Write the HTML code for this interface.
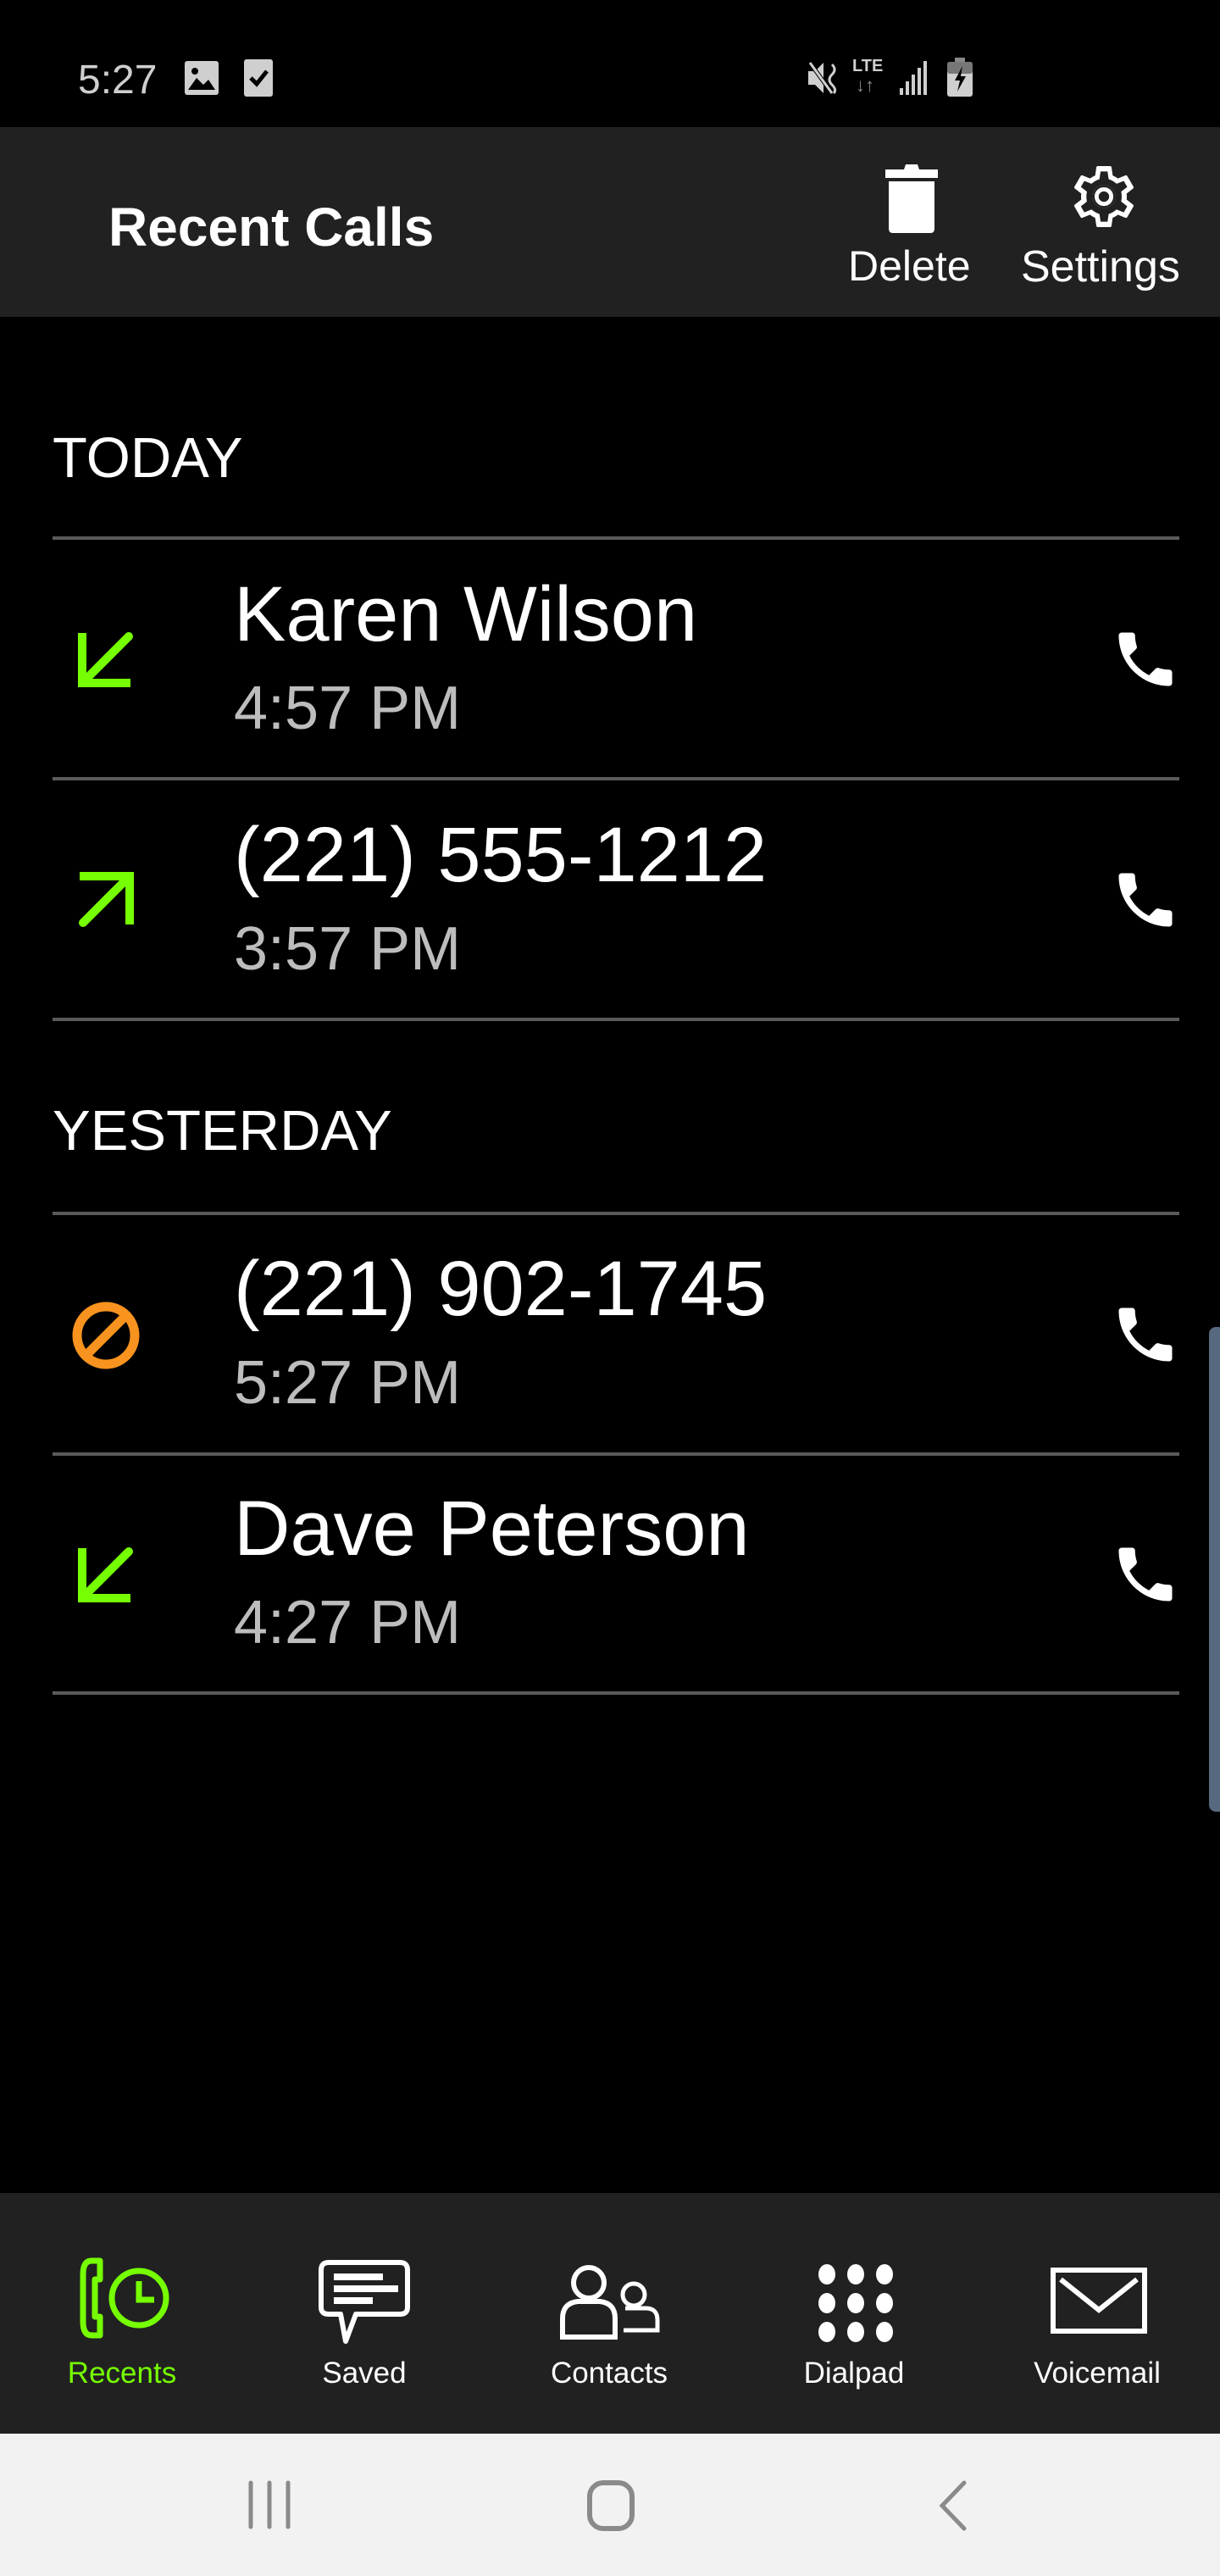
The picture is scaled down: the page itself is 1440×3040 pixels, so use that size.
<!DOCTYPE html>
<html><head><meta charset="utf-8"><style>
html,body{margin:0;padding:0}
body{width:1440px;height:3040px;background:#000;position:relative;overflow:hidden;font-family:"Liberation Sans",Arial,sans-serif;}
.a{position:absolute;line-height:1;white-space:nowrap}
.line{position:absolute;left:62px;width:1330px;height:4px;background:#5a5a5a}
.name{font-size:92px;color:#fff;left:276px}
.time{font-size:72px;color:#bdbdbd;left:276px}
.sec{font-size:67px;color:#fff;left:62px}
.nl{font-size:35px;color:#fff;transform:translateX(-50%)}
svg{position:absolute}
</style></head><body>
<!-- status bar -->
<div class="a" style="left:92px;top:71px;font-size:48px;color:#cfcfcf">5:27</div>
<svg style="left:218px;top:72px" width="40" height="40" viewBox="0 0 40 40"><rect x="0" y="0" width="40" height="40" rx="3" fill="#cfcfcf"/><circle cx="12" cy="12" r="4" fill="#000"/><path d="M4 34 L14 20 L22 28 L28 22 L36 34Z" fill="#000"/></svg>
<svg style="left:288px;top:70px" width="34" height="44" viewBox="0 0 34 44"><rect x="0" y="0" width="34" height="44" rx="3" fill="#cfcfcf"/><path d="M8 22 L15 29 L27 14" stroke="#000" stroke-width="5" fill="none"/></svg>
<svg style="left:952px;top:70px" width="44" height="44" viewBox="0 0 44 44"><path d="M2 14 H10 L20 4 V40 L10 30 H2Z" fill="#cfcfcf"/><path d="M4 4 L30 40" stroke="#000" stroke-width="5"/><path d="M4 4 L30 40" stroke="#cfcfcf" stroke-width="3"/><path d="M30 6 Q36 12 30 18 Q24 24 30 30 Q36 36 32 40" stroke="#cfcfcf" stroke-width="3" fill="none"/></svg>
<div class="a" style="left:1006px;top:68px;font-size:20px;color:#cfcfcf;font-weight:bold">LTE</div>
<div class="a" style="left:1010px;top:90px;font-size:22px;color:#888">↓↑</div>
<svg style="left:1062px;top:72px" width="34" height="40" viewBox="0 0 34 40"><rect x="0" y="32" width="4" height="8" fill="#cfcfcf"/><rect x="7" y="24" width="4" height="16" fill="#cfcfcf"/><rect x="14" y="16" width="4" height="24" fill="#cfcfcf"/><rect x="21" y="8" width="4" height="32" fill="#cfcfcf"/><rect x="28" y="0" width="4" height="40" fill="#cfcfcf"/></svg>
<svg style="left:1118px;top:68px" width="30" height="46" viewBox="0 0 30 46"><rect x="9" y="0" width="12" height="6" fill="#888"/><rect x="0" y="5" width="30" height="41" rx="3" fill="#cfcfcf"/><rect x="0" y="5" width="30" height="14" rx="3" fill="#777"/><path d="M18 10 L9 27 H15 L12 40 L22 22 H16Z" fill="#000"/></svg>
<!-- header -->
<div style="position:absolute;left:0;top:150px;width:1440px;height:224px;background:#212121"></div>
<div class="a" style="left:128px;top:236px;font-size:64px;color:#fff;font-weight:bold">Recent Calls</div>
<svg style="left:1045px;top:194px" width="62" height="82" viewBox="0 0 62 82"><path d="M24 0 H38 L40 6 H62 V16 H0 V6 H22Z" fill="#fff"/><path d="M4 20 H58 V76 Q58 81 53 81 H9 Q4 81 4 76Z" fill="#fff"/></svg>
<div class="a" style="left:1001px;top:289px;font-size:50px;color:#fff">Delete</div>
<svg style="left:1258px;top:187px" width="90" height="90" viewBox="0 0 24 24"><path fill="#fff" d="M19.14 12.94c.04-.3.06-.61.06-.94 0-.32-.02-.64-.07-.94l2.03-1.58a.49.49 0 0 0 .12-.61l-1.920-3.32a.488.488 0 0 0-.59-.22l-2.39.96c-.5-.38-1.03-.7-1.62-.94l-.36-2.54a.484.484 0 0 0-.48-.41h-3.84c-.24 0-.43.17-.47.41l-.36 2.54c-.59.24-1.130.57-1.62.94l-2.39-.96c-.22-.08-.47 0-.59.22L2.74 8.87c-.12.21-.08.47.12.61l2.03 1.58c-.05.3-.09.63-.09.94s.02.64.07.94l-2.03 1.58a.49.49 0 0 0-.12.61l1.92 3.32c.12.22.37.29.59.22l2.39-.96c.5.38 1.03.7 1.62.94l.36 2.54c.05.24.24.41.48.41h3.84c.24 0 .44-.17.47-.41l.36-2.54c.59-.24 1.13-.56 1.62-.94l2.39.96c.22.08.47 0 .59-.22l1.92-3.32c.12-.22.07-.47-.12-.61l-2.01-1.58zM12 15.6c-1.98 0-3.6-1.62-3.6-3.6s1.62-3.6 3.6-3.6 3.6 1.62 3.6 3.6-1.62 3.6-3.6 3.6z"/><path fill="#212121" d="M17.6 12c0-.3-.02-.58-.06-.87l-.1-.7 1.9-1.48-1.1-1.9-2.24.9-.56-.43a5.8 5.8 0 0 0-1.3-.76l-.66-.27-.34-2.39h-2.2l-.34 2.39-.66.27c-.46.19-.9.45-1.3.76l-.56.43-2.24-.9-1.1 1.9 1.9 1.48-.1.7c-.04.3-.06.58-.06.87s.02.57.06.87l.1.7-1.9 1.48 1.1 1.9 2.24-.9.56.43c.4.31.84.57 1.3.76l.66.27.34 2.39h2.2l.34-2.39.66-.27c.46-.19.9-.45 1.3-.76l.56-.43 2.24.9 1.1-1.9-1.9-1.48.1-.7c.04-.3.06-.58.06-.87zM12 15.6c-1.98 0-3.6-1.62-3.6-3.6s1.62-3.6 3.6-3.6 3.6 1.62 3.6 3.6-1.62 3.6-3.6 3.6z"/><circle cx="12" cy="12" r="2.3" fill="none" stroke="#fff" stroke-width="1.3"/></svg>
<div class="a" style="left:1205px;top:289px;font-size:52px;color:#fff">Settings</div>

<!-- list -->
<div class="a sec" style="top:507px">TODAY</div>
<div class="line" style="top:633px"></div>
<div class="a name" style="top:679px">Karen Wilson</div>
<div class="a time" style="top:800px">4:57 PM</div>
<div class="line" style="top:917px"></div>
<div class="a name" style="top:963px">(221) 555-1212</div>
<div class="a time" style="top:1084px">3:57 PM</div>
<div class="line" style="top:1201px"></div>
<div class="a sec" style="top:1301px">YESTERDAY</div>
<div class="line" style="top:1430px"></div>
<div class="a name" style="top:1475px">(221) 902-1745</div>
<div class="a time" style="top:1596px">5:27 PM</div>
<div class="line" style="top:1714px"></div>
<div class="a name" style="top:1758px">Dave Peterson</div>
<div class="a time" style="top:1879px">4:27 PM</div>
<div class="line" style="top:1996px"></div>

<!-- direction icons -->
<svg style="left:92px;top:745px" width="66" height="66" viewBox="0 0 66 66"><path d="M60 6 L8 58" stroke="#76ff03" stroke-width="10" stroke-linecap="round"/><path d="M5 2 V61 H62" stroke="#76ff03" stroke-width="10" fill="none"/></svg>
<svg style="left:92px;top:1029px" width="66" height="66" viewBox="0 0 66 66"><path d="M6 60 L58 8" stroke="#76ff03" stroke-width="10" stroke-linecap="round"/><path d="M2 5 H61 V62" stroke="#76ff03" stroke-width="10" fill="none"/></svg>
<svg style="left:84px;top:1535px" width="82" height="82" viewBox="0 0 82 82"><circle cx="41" cy="41" r="34" stroke="#f7931e" stroke-width="11" fill="none"/><path d="M64 18 L18 64" stroke="#f7931e" stroke-width="11"/></svg>
<svg style="left:92px;top:1825px" width="66" height="66" viewBox="0 0 66 66"><path d="M60 6 L8 58" stroke="#76ff03" stroke-width="10" stroke-linecap="round"/><path d="M5 2 V61 H62" stroke="#76ff03" stroke-width="10" fill="none"/></svg>

<!-- phone icons -->
<svg style="left:1310px;top:736px" width="84" height="84" viewBox="0 0 24 24"><path fill="#fff" d="M6.62 10.79c1.44 2.83 3.76 5.14 6.59 6.59l2.2-2.2c.27-.27.67-.36 1.02-.24 1.12.37 2.33.57 3.57.57.55 0 1 .45 1 1V20c0 .55-.45 1-1 1-9.39 0-17-7.61-17-17 0-.55.45-1 1-1h3.5c.55 0 1 .45 1 1 0 1.250.2 2.45.57 3.57.11.35.03.74-.25 1.02l-2.2 2.2z"/></svg>
<svg style="left:1310px;top:1020px" width="84" height="84" viewBox="0 0 24 24"><path fill="#fff" d="M6.62 10.79c1.44 2.83 3.76 5.14 6.59 6.59l2.2-2.2c.27-.27.67-.36 1.02-.24 1.12.37 2.33.57 3.57.57.55 0 1 .45 1 1V20c0 .55-.45 1-1 1-9.39 0-17-7.61-17-17 0-.55.45-1 1-1h3.5c.55 0 1 .45 1 1 0 1.25.2 2.45.57 3.57.11.35.03.74-.25 1.02l-2.2 2.2z"/></svg>
<svg style="left:1310px;top:1533px" width="84" height="84" viewBox="0 0 24 24"><path fill="#fff" d="M6.62 10.79c1.44 2.83 3.76 5.14 6.59 6.59l2.2-2.2c.27-.27.67-.36 1.02-.24 1.12.37 2.33.57 3.57.57.55 0 1 .45 1 1V20c0 .55-.45 1-1 1-9.39 0-17-7.61-17-17 0-.55.45-1 1-1h3.5c.55 0 1 .45 1 1 0 1.25.2 2.45.57 3.57.11.35.03.74-.25 1.02l-2.2 2.2z"/></svg>
<svg style="left:1310px;top:1816px" width="84" height="84" viewBox="0 0 24 24"><path fill="#fff" d="M6.62 10.79c1.44 2.83 3.76 5.14 6.59 6.59l2.2-2.2c.27-.27.67-.36 1.02-.24 1.12.37 2.33.57 3.57.57.55 0 1 .45 1 1V20c0 .55-.45 1-1 1-9.39 0-17-7.61-17-17 0-.55.45-1 1-1h3.5c.55 0 1 .45 1 1 0 1.25.2 2.45.57 3.57.11.35.03.74-.25 1.02l-2.2 2.2z"/></svg>

<!-- scrollbar -->
<div style="position:absolute;left:1427px;top:1566px;width:20px;height:572px;background:#56697f;border-radius:8px"></div>

<!-- bottom nav -->
<div style="position:absolute;left:0;top:2588px;width:1440px;height:284px;background:#212121"></div>
<svg style="left:90px;top:2664px" width="112" height="96" viewBox="0 0 112 96"><path d="M28 4 H18 Q8 4 8 20 V76 Q8 92 18 92 H28 V70 H22 V26 H28Z" stroke="#76ff03" stroke-width="7" fill="none" stroke-linejoin="round"/><circle cx="74" cy="48" r="32" stroke="#76ff03" stroke-width="7" fill="none"/><path d="M74 28 V50 H92" stroke="#76ff03" stroke-width="7" fill="none"/></svg>
<svg style="left:376px;top:2667px" width="108" height="100" viewBox="0 0 108 100"><path d="M12 3 H96 Q105 3 105 12 V56 Q105 64 96 64 H44 L32 96 L26 64 H12 Q3 64 3 56 V12 Q3 3 12 3Z" stroke="#fff" stroke-width="6" fill="none" stroke-linejoin="round"/><rect x="18" y="16" width="58" height="8" fill="#fff"/><rect x="18" y="30" width="76" height="8" fill="#fff"/><rect x="18" y="44" width="46" height="8" fill="#fff"/></svg>
<svg style="left:660px;top:2670px" width="120" height="92" viewBox="0 0 120 92"><circle cx="35" cy="24" r="18" stroke="#fff" stroke-width="6" fill="none"/><path d="M4 88 V66 Q4 48 22 46 H48 Q66 48 66 66 V88Z" stroke="#fff" stroke-width="6" fill="none"/><circle cx="88" cy="38" r="13" stroke="#fff" stroke-width="5" fill="none"/><path d="M76 80 H116 V68 Q116 54 102 54 H78" stroke="#fff" stroke-width="5" fill="none"/></svg>
<svg style="left:962px;top:2670px" width="96" height="96" viewBox="0 0 96 96"><g fill="#fff"><ellipse cx="14" cy="14" rx="10" ry="12"/><ellipse cx="48" cy="14" rx="10" ry="12"/><ellipse cx="82" cy="14" rx="10" ry="12"/><ellipse cx="14" cy="48" rx="10" ry="12"/><ellipse cx="48" cy="48" rx="10" ry="12"/><ellipse cx="82" cy="48" rx="10" ry="12"/><ellipse cx="14" cy="82" rx="10" ry="12"/><ellipse cx="48" cy="82" rx="10" ry="12"/><ellipse cx="82" cy="82" rx="10" ry="12"/></g></svg>
<svg style="left:1240px;top:2676px" width="114" height="78" viewBox="0 0 114 78"><rect x="3" y="3" width="108" height="72" stroke="#fff" stroke-width="6" fill="none"/><path d="M12 14 L57 50 L102 14" stroke="#fff" stroke-width="6" fill="none"/></svg>
<div class="a nl" style="left:144px;top:2783px;color:#76ff03">Recents</div>
<div class="a nl" style="left:430px;top:2783px">Saved</div>
<div class="a nl" style="left:719px;top:2783px">Contacts</div>
<div class="a nl" style="left:1008px;top:2783px">Dialpad</div>
<div class="a nl" style="left:1295px;top:2783px">Voicemail</div>

<!-- system nav -->
<div style="position:absolute;left:0;top:2872px;width:1440px;height:168px;background:#f2f2f2"></div>
<svg style="left:290px;top:2926px" width="56" height="60" viewBox="0 0 56 60"><g stroke="#8a8a8a" stroke-width="5" stroke-linecap="round"><path d="M6 4 V56"/><path d="M28 4 V56"/><path d="M50 4 V56"/></g></svg>
<svg style="left:692px;top:2926px" width="58" height="62" viewBox="0 0 58 62"><rect x="4" y="4" width="50" height="54" rx="16" stroke="#8a8a8a" stroke-width="6" fill="none"/></svg>
<svg style="left:1104px;top:2926px" width="40" height="62" viewBox="0 0 40 62"><path d="M34 4 L8 31 L34 58" stroke="#8a8a8a" stroke-width="5" fill="none" stroke-linecap="round"/></svg>
</body></html>
